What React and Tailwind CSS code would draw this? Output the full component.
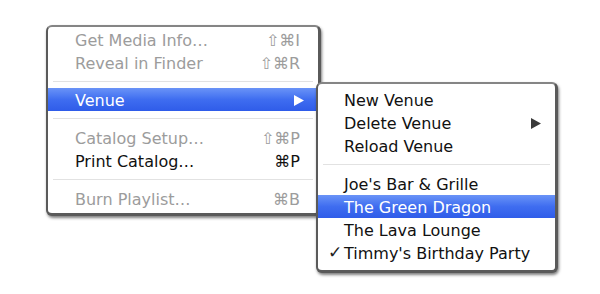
import React from "react";

const font = { fontFamily: '"DejaVu Sans", "Liberation Sans", sans-serif' };

function Arrow({ color }) {
  return (
    <svg width="10" height="11" viewBox="0 0 10 11" className="shrink-0">
      <polygon points="0,0 10,5.5 0,11" fill={color} />
    </svg>
  );
}

function Row({ label, shortcut, disabled, active, arrow, check, pl = "pl-[27px]" }) {
  const text = active ? "text-white" : disabled ? "text-[#9c9c9c]" : "text-[#111]";
  return (
    <div
      className={`relative flex h-[23px] items-center justify-between ${pl} pr-[14px] pt-[2px] ${
        active ? "bg-gradient-to-b from-[#6a93f7] via-[#3f6df0] to-[#2f5ce9]" : ""
      }`}
    >
      {check && <span className="absolute left-[10px] top-[3px] text-[17px] font-bold leading-none text-[#222]">✓</span>}
      <span className={`text-[16px] leading-none ${text}`}>{label}</span>
      {shortcut && (
        <span className={`text-[16px] leading-none ${disabled ? "text-[#9c9c9c]" : "text-[#111]"}`}>
          {shortcut}
        </span>
      )}
      {arrow && <Arrow color={active ? "#ffffff" : "#3a3a3a"} />}
    </div>
  );
}

function Sep({ h = "h-[15px]" }) {
  return (
    <div className={`flex ${h} items-center px-[5px]`}>
      <div className="h-px w-full bg-[#e2e2e2]" />
    </div>
  );
}

export default function App() {
  return (
    <div className="relative h-[294px] w-[600px] overflow-hidden bg-white" style={font}>
      <div className="pl-[46px] pt-[25px]">
        <div className="flex h-[191px] w-[275px] flex-col rounded-[6px] border-[2px] border-r-[3px] border-b-[3px] border-[#5a5a5a] border-t-[#858585] bg-white pt-[1px] shadow-[1px_2px_3px_rgba(0,0,0,0.5)]">
          <div className="flex flex-col pr-[4px]">
            <Row label="Get Media Info…" shortcut="⇧⌘I" disabled />
            <Row label="Reveal in Finder" shortcut="⇧⌘R" disabled />
          </div>
          <Sep h="h-[14px]" />
          <Row label="Venue" active arrow />
          <Sep />
          <div className="flex flex-col pr-[4px]">
            <Row label="Catalog Setup…" shortcut="⇧⌘P" disabled />
            <Row label="Print Catalog…" shortcut="⌘P" />
          </div>
          <Sep />
          <div className="flex flex-col pr-[4px]">
            <Row label="Burn Playlist…" shortcut="⌘B" disabled />
          </div>
        </div>
      </div>

      <div className="absolute left-[316px] top-[82px] flex h-[191px] w-[242px] flex-col rounded-[6px] border-[2px] border-r-[3px] border-b-[3px] border-[#5a5a5a] border-t-[#858585] bg-white pt-[4px] shadow-[1px_2px_3px_rgba(0,0,0,0.5)]">
        <Row label="New Venue" pl="pl-[26px]" />
        <Row label="Delete Venue" arrow pl="pl-[26px]" />
        <Row label="Reload Venue" pl="pl-[26px]" />
        <Sep />
        <Row label="Joe's Bar & Grille" pl="pl-[26px]" />
        <Row label="The Green Dragon" active pl="pl-[26px]" />
        <Row label="The Lava Lounge" pl="pl-[26px]" />
        <Row label="Timmy's Birthday Party" check pl="pl-[26px]" />
      </div>
    </div>
  );
}
